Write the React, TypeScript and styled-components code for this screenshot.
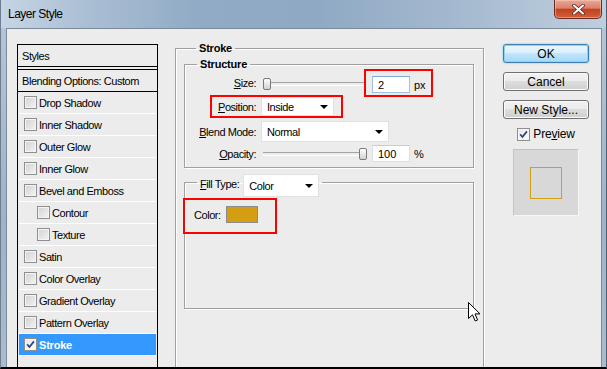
import React from "react";
import styled, { createGlobalStyle, css } from "styled-components";

const GlobalStyle = createGlobalStyle`
  html, body { margin: 0; padding: 0; background: #fff; }
  body { font-family: "Liberation Sans", Arial, sans-serif; font-size: 11px; color: #000; }
  * { box-sizing: border-box; }
`;

const Screen = styled.div`
  position: relative;
  width: 607px;
  height: 369px;
  overflow: hidden;
  display: flex;
  flex-direction: column;
  background: linear-gradient(180deg, #b6c7d9 0%, #9db3ca 60%, #a9bcd0 100%);
  border-left: 1px solid #6e7e90;
  border-right: 1px solid #4f5d6c;
  border-bottom: 2px solid #000;
  font-family: "Liberation Sans", Arial, sans-serif;
  font-size: 11px;
  letter-spacing: -0.45px;
  color: #000;
`;

const TitleBar = styled.div`
  height: 28px;
  flex-shrink: 0;
  display: flex;
  align-items: flex-start;
  justify-content: space-between;
  padding-left: 7px;
  background: linear-gradient(90deg, #c6d5e5 0%, #abbfd3 14%, #91abc6 32%, #8fa9c4 52%, #a3b8ce 74%, #bfcedf 100%);
`;

const Title = styled.span`
  font-size: 12px;
  letter-spacing: -0.5px;
  line-height: 29px;
  color: #000;
`;

const CloseButton = styled.div`
  width: 48px;
  height: 19px;
  margin-right: 4px;
  display: flex;
  align-items: center;
  justify-content: center;
  border: 1px solid #6b2a1e;
  border-top: none;
  border-radius: 0 0 5px 5px;
  background: linear-gradient(180deg, #e8a898 0%, #dc806b 45%, #c4411f 52%, #d0603c 100%);
  box-shadow: inset 0 0 0 1px rgba(255, 220, 200, 0.45);
`;

const Body = styled.div`
  flex: 1;
  min-height: 0;
  display: flex;
  padding: 0 4px 0 5px;
`;

const Client = styled.div`
  flex: 1;
  min-height: 0;
  display: flex;
  align-items: flex-start;
  overflow: hidden;
  background: #ececec;
  border-top: 1px solid #7d8a98;
  border-left: 1px solid #7d8a98;
  border-right: 1px solid #7d8a98;
  padding-left: 10px;
`;

/* ---------- Styles list ---------- */

const StylesPanel = styled.div`
  flex-shrink: 0;
  align-self: stretch;
  width: 141px;
  margin-top: 15px;
  border: 1px solid #000;
  border-bottom: none;
  display: flex;
  flex-direction: column;
`;

const PanelHeader = styled.div`
  height: 22px;
  padding-left: 4px;
  display: flex;
  align-items: center;
  border-bottom: 1px solid #000;
`;

const BlendingRow = styled.div`
  height: 23px;
  margin-top: 2px;
  padding-left: 4px;
  display: flex;
  align-items: center;
  border-top: 1px solid #000;
  border-bottom: 1px solid #000;
`;

const StyleRow = styled.div<{ $sub?: boolean; $selected?: boolean }>`
  height: 22px;
  margin: 0 1px;
  padding-left: ${(p) => (p.$sub ? 18 : 5)}px;
  display: flex;
  align-items: center;
  gap: 2px;
  border-bottom: 1px solid #fff;
  ${(p) =>
    p.$selected &&
    css`
      background: #3399ff;
      color: #fff;
      font-weight: bold;
      letter-spacing: -0.2px;
    `}
`;

const CheckBoxBox = styled.span<{ $checked?: boolean }>`
  width: 13px;
  height: 13px;
  flex-shrink: 0;
  display: inline-flex;
  align-items: center;
  justify-content: center;
  border: 1px solid #8e8f8f;
  box-shadow: inset 0 0 0 1px #f4f4f4;
  background: ${(p) =>
    p.$checked
      ? "linear-gradient(135deg, #e6e6e6 0%, #ffffff 100%)"
      : "linear-gradient(135deg, #d2d2d2 0%, #f3f3f3 100%)"};
`;

/* ---------- Group boxes ---------- */

const Group = styled.fieldset`
  margin: 0;
  min-width: 0;
  padding: 0;
  border: 1px solid #a0a0a0;
  box-shadow: inset 1px 1px 0 #fff, 1px 1px 0 #fff;
`;

const StrokeGroup = styled(Group)`
  flex-shrink: 0;
  align-self: stretch;
  width: 309px;
  margin: 13px 0 -20px 17px;
  padding: 0 9px 0 8px;
`;

const StructureGroup = styled(Group)`
  margin-top: 3px;
  padding-bottom: 5px;
`;

const FillGroup = styled(Group)`
  margin-top: 6px;
  height: 135px;
  display: flex;
  flex-direction: column;
  align-items: flex-start;
`;

const Legend = styled.legend`
  margin-left: 12px;
  padding: 0 3px;
  font-weight: bold;
  letter-spacing: -0.2px;
  line-height: 13px;
`;

const FillLegend = styled.legend`
  margin-left: 12px;
  padding: 0 3px;
  height: 16px;
  display: flex;
  align-items: flex-start;
  gap: 4px;
`;

const LegendLabel = styled.span`
  padding-top: 4px;
  line-height: 13px;
`;

/* ---------- Form rows ---------- */

const Row = styled.div<{ $top?: number }>`
  display: flex;
  align-items: center;
  margin-top: ${(p) => p.$top ?? 0}px;
`;

const FieldLabel = styled.span<{ $w: number }>`
  width: ${(p) => p.$w}px;
  flex-shrink: 0;
  text-align: right;
  margin-right: 5px;
  white-space: nowrap;
`;

const Highlight = styled.div<{ $pad: string; $left?: number }>`
  display: flex;
  align-items: center;
  padding: ${(p) => p.$pad};
  margin-left: ${(p) => p.$left ?? 0}px;
  outline: 2px solid #f00;
`;

const SliderTrack = styled.div`
  position: relative;
  width: 105px;
  height: 13px;
  margin-left: 2px;
  flex-shrink: 0;
  &::before {
    content: "";
    position: absolute;
    left: 0;
    right: 4px;
    top: 5px;
    height: 2px;
    border-top: 1px solid #a3a3a3;
    border-bottom: 1px solid #fff;
  }
`;

const SliderThumb = styled.span<{ $pos: number }>`
  position: absolute;
  top: 1px;
  left: ${(p) => p.$pos}px;
  width: 8px;
  height: 12px;
  border: 1px solid #7a7a7a;
  border-radius: 2px 2px 2px 2px;
  background: linear-gradient(180deg, #ffffff 0%, #e9e9e9 50%, #d2d2d2 100%);
`;

const InputGroup = styled.div<{ $highlight?: boolean }>`
  display: flex;
  align-items: center;
  ${(p) =>
    p.$highlight
      ? css`
          margin-left: -2px;
          padding: 5px 5px 2px 6px;
          outline: 2px solid #f00;
        `
      : css`
          padding-left: 4px;
        `}
`;

const NumberBox = styled.div<{ $focus?: boolean }>`
  width: 38px;
  height: 17px;
  padding-left: 5px;
  display: flex;
  align-items: center;
  background: #fff;
  border: 1px solid ${(p) => (p.$focus ? "#9cc2e6" : "#dcdfe4")};
  border-top-color: ${(p) => (p.$focus ? "#7ea9d6" : "#c9ccd2")};
  letter-spacing: 0;
`;

const Unit = styled.span`
  margin-left: 4px;
  letter-spacing: 0;
`;

const Select = styled.div<{ $w: number; $h: number }>`
  width: ${(p) => p.$w}px;
  height: ${(p) => p.$h}px;
  flex-shrink: 0;
  display: flex;
  align-items: center;
  justify-content: space-between;
  padding: 0 5px 0 5px;
  background: #fff;
  border: 1px solid #e1e1e1;
`;

const ColorSwatch = styled.span<{ $color: string }>`
  width: 32px;
  height: 17px;
  margin-left: 5px;
  background: ${(p) => p.$color};
  border: 1px solid #8c8c8c;
`;

/* ---------- Right column ---------- */

const SideColumn = styled.div`
  flex-shrink: 0;
  width: 86px;
  margin: 15px 0 0 19px;
  display: flex;
  flex-direction: column;
  align-items: center;
  gap: 9px;
`;

const Button = styled.div<{ $default?: boolean }>`
  width: 86px;
  height: 19px;
  display: flex;
  align-items: center;
  justify-content: center;
  font-size: 12px;
  letter-spacing: 0;
  border-radius: 3px;
  border: 1px solid ${(p) => (p.$default ? "#3c7fb1" : "#707070")};
  background: ${(p) =>
    p.$default
      ? "linear-gradient(180deg, #eaf6fd 0%, #d9f0fc 50%, #bee6fd 50%, #a7d9f5 100%)"
      : "linear-gradient(180deg, #f2f2f2 0%, #ebebeb 50%, #dddddd 50%, #cfcfcf 100%)"};
  box-shadow: ${(p) =>
    p.$default ? "inset 0 0 0 1px #8fd1f5, 0 0 2px #5bbcf0" : "inset 0 0 0 1px #fbfbfb"};
`;

const PreviewToggle = styled.div`
  display: flex;
  align-items: center;
  gap: 3px;
  margin-top: -1px;
  font-size: 12px;
  letter-spacing: -0.2px;
`;

const PreviewBox = styled.div`
  width: 66px;
  height: 67px;
  margin-top: -1px;
  display: flex;
  align-items: center;
  justify-content: center;
  background: #d8d8d8;
  border: 1px solid #c3c3c3;
  border-right-color: #f6f6f6;
  border-bottom-color: #f6f6f6;
`;

const PreviewSquare = styled.div`
  width: 32px;
  height: 32px;
  border: 1px solid #d49e12;
`;

const Cursor = styled.svg`
  position: absolute;
  left: 467px;
  top: 302px;
`;

/* ---------- Pieces ---------- */

const CheckBox = ({ checked }: { checked?: boolean }) => (
  <CheckBoxBox $checked={checked}>
    {checked && (
      <svg width="9" height="9" viewBox="0 0 9 9">
        <path d="M1.2 4.4 L3.5 7 L7.9 1.4" fill="none" stroke="#2b3f86" strokeWidth="1.7" />
      </svg>
    )}
  </CheckBoxBox>
);

const Arrow = () => (
  <svg width="8" height="4" viewBox="0 0 8 4">
    <path d="M0 0 H8 L4 4 Z" fill="#000" />
  </svg>
);

const Slider = ({ pos }: { pos: number }) => (
  <SliderTrack>
    <SliderThumb $pos={pos} />
  </SliderTrack>
);

const styleItems: { label: string; sub?: boolean; checked?: boolean }[] = [
  { label: "Drop Shadow" },
  { label: "Inner Shadow" },
  { label: "Outer Glow" },
  { label: "Inner Glow" },
  { label: "Bevel and Emboss" },
  { label: "Contour", sub: true },
  { label: "Texture", sub: true },
  { label: "Satin" },
  { label: "Color Overlay" },
  { label: "Gradient Overlay" },
  { label: "Pattern Overlay" },
  { label: "Stroke", checked: true },
];

export default function App() {
  return (
    <>
      <GlobalStyle />
      <Screen>
        <TitleBar>
          <Title>Layer Style</Title>
          <CloseButton>
            <svg width="13" height="11" viewBox="0 0 13 11">
              <path d="M2 1.5 L11 9.5 M11 1.5 L2 9.5" stroke="#5a2418" strokeWidth="3.6" strokeLinecap="round" />
              <path d="M2 1.5 L11 9.5 M11 1.5 L2 9.5" stroke="#fff" strokeWidth="2" strokeLinecap="round" />
            </svg>
          </CloseButton>
        </TitleBar>
        <Body>
          <Client>
            <StylesPanel>
              <PanelHeader>Styles</PanelHeader>
              <BlendingRow>Blending Options: Custom</BlendingRow>
              {styleItems.map((item) => (
                <StyleRow key={item.label} $sub={item.sub} $selected={item.checked}>
                  <CheckBox checked={item.checked} />
                  <span>{item.label}</span>
                </StyleRow>
              ))}
            </StylesPanel>

            <StrokeGroup>
              <Legend>Stroke</Legend>
              <StructureGroup>
                <Legend>Structure</Legend>
                <Row>
                  <FieldLabel $w={71}>
                    <u>S</u>ize:
                  </FieldLabel>
                  <Slider pos={0} />
                  <InputGroup $highlight>
                    <NumberBox $focus>2</NumberBox>
                    <Unit>px</Unit>
                  </InputGroup>
                </Row>
                <Row $top={2}>
                  <Highlight $pad="0 7px 0 6px" $left={27}>
                    <FieldLabel $w={38}>
                      <u>P</u>osition:
                    </FieldLabel>
                    <Select $w={73} $h={19}>
                      <span>Inside</span>
                      <Arrow />
                    </Select>
                  </Highlight>
                </Row>
                <Row $top={5}>
                  <FieldLabel $w={71}>
                    <u>B</u>lend Mode:
                  </FieldLabel>
                  <Select $w={128} $h={21}>
                    <span>Normal</span>
                    <Arrow />
                  </Select>
                </Row>
                <Row $top={3}>
                  <FieldLabel $w={71}>
                    <u>O</u>pacity:
                  </FieldLabel>
                  <Slider pos={96} />
                  <InputGroup>
                    <NumberBox>100</NumberBox>
                    <Unit>%</Unit>
                  </InputGroup>
                </Row>
              </StructureGroup>

              <FillGroup>
                <FillLegend>
                  <LegendLabel>
                    <u>F</u>ill Type:
                  </LegendLabel>
                  <Select $w={76} $h={23}>
                    <span>Color</span>
                    <Arrow />
                  </Select>
                </FillLegend>
                <Highlight $pad="6px 17px 9px 9px" style={{ marginTop: 10 }}>
                  <span>Color:</span>
                  <ColorSwatch $color="#d49e12" />
                </Highlight>
              </FillGroup>
            </StrokeGroup>

            <SideColumn>
              <Button $default>OK</Button>
              <Button>Cancel</Button>
              <Button>New Style...</Button>
              <PreviewToggle>
                <CheckBox checked />
                <span>
                  Pre<u>v</u>iew
                </span>
              </PreviewToggle>
              <PreviewBox>
                <PreviewSquare />
              </PreviewBox>
            </SideColumn>
          </Client>
        </Body>
        <Cursor width="13" height="21" viewBox="0 0 13 21">
          <path
            d="M0.5 0.5 L0.5 16.5 L4.5 12.8 L7.2 19 L9.6 18 L7 11.9 L12 11.9 Z"
            fill="#fff"
            stroke="#000"
            strokeWidth="1"
            strokeLinejoin="miter"
          />
        </Cursor>
      </Screen>
    </>
  );
}
